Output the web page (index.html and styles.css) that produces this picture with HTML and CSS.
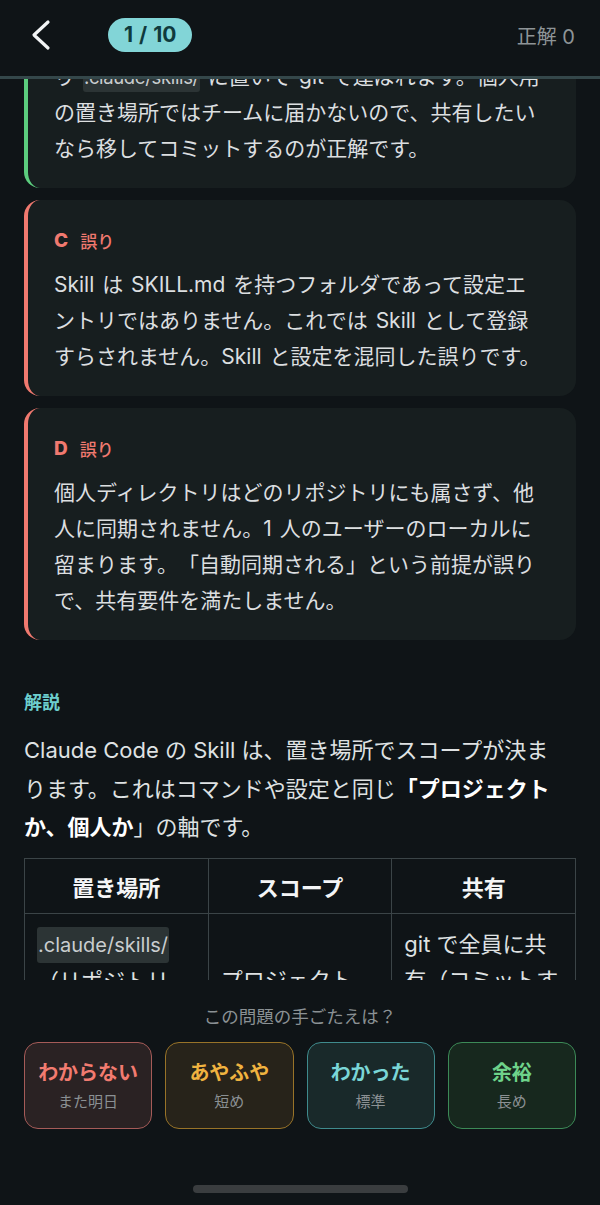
FILE: index.html
```html
<!DOCTYPE html>
<html lang="ja">
<head>
<meta charset="utf-8">
<title>Quiz</title>
<link rel="stylesheet" href="styles.css">
</head>
<body>
<div class="app">
  <header class="topbar">
    <button class="back" aria-label="戻る">
      <svg width="24" height="32" viewBox="0 0 24 32"><polyline points="19,3 5,16 19,29" fill="none" stroke="#f2f4f5" stroke-width="3.2" stroke-linecap="round" stroke-linejoin="round"/></svg>
    </button>
    <span class="progress">1 / 10</span>
    <span class="spacer"></span>
    <span class="score">正解 0</span>
  </header>

  <main class="scroll">
    <div class="scroll-inner">
      <section class="choice ok">
        <div class="choice-head"><span class="letter">B</span><span class="verdict">正解</span></div>
        <p class="choice-body">チームで共有する Skill はリポジトリ内のつま<br>り <code>.claude/skills/</code> に置いて git で運ばれます。個人用の置き場所ではチームに届かないので、共有したいなら移してコミットするのが正解です。</p>
      </section>

      <section class="choice ng">
        <div class="choice-head"><span class="letter">C</span><span class="verdict">誤り</span></div>
        <p class="choice-body">Skill は SKILL.md を持つフォルダであって設定エントリではありません。これでは Skill として登録すらされません。Skill と設定を混同した誤りです。</p>
      </section>

      <section class="choice ng">
        <div class="choice-head"><span class="letter">D</span><span class="verdict">誤り</span></div>
        <p class="choice-body">個人ディレクトリはどのリポジトリにも属さず、他人に同期されません。1 人のユーザーのローカルに留まります。「自動同期される」という前提が誤りで、共有要件を満たしません。</p>
      </section>

      <section class="explain">
        <h2 class="explain-title">解説</h2>
        <p class="explain-body">Claude Code の Skill は、置き場所でスコープが決まります。これはコマンドや設定と同じ<strong>「プロジェクトか、個人か</strong>」の軸です。</p>
        <table class="scope-table">
          <thead>
            <tr><th>置き場所</th><th>スコープ</th><th>共有</th></tr>
          </thead>
          <tbody>
            <tr>
              <td><code>.claude/skills/</code>（リポジトリ内）</td>
              <td class="mid">プロジェクト</td>
              <td>git で全員に共有（コミットすれば届く）</td>
            </tr>
            <tr>
              <td><code>~/.claude/skills/</code>（ホーム）</td>
              <td class="mid">個人</td>
              <td>自分だけ</td>
            </tr>
          </tbody>
        </table>
      </section>
    </div>
  </main>

  <footer class="rate">
    <p class="rate-prompt">この問題の手ごたえは？</p>
    <div class="rate-buttons">
      <button class="rate-btn red"><span class="rate-title">わからない</span><span class="rate-sub">また明日</span></button>
      <button class="rate-btn yellow"><span class="rate-title">あやふや</span><span class="rate-sub">短め</span></button>
      <button class="rate-btn teal"><span class="rate-title">わかった</span><span class="rate-sub">標準</span></button>
      <button class="rate-btn green"><span class="rate-title">余裕</span><span class="rate-sub">長め</span></button>
    </div>
    <div class="home-indicator"></div>
  </footer>
</div>
</body>
</html>
```

FILE: styles.css
```css
* { box-sizing: border-box; }

html, body {
  margin: 0;
  padding: 0;
  background: #0f1417;
}

body {
  font-family: "Inter", "Noto Sans CJK JP", sans-serif;
  color: #dfe2e3;
  text-spacing-trim: space-all;
}

.app {
  width: 600px;
  height: 1205px;
  display: flex;
  flex-direction: column;
  overflow: hidden;
  background: #0f1417;
}

/* ---------- header ---------- */
.topbar {
  flex: 0 0 79px;
  display: flex;
  align-items: center;
  padding: 0 25px 6px 29px;
  border-bottom: 3px solid #34474a;
}

.back {
  width: 24px;
  height: 32px;
  padding: 0;
  border: 0;
  background: none;
  display: flex;
}

.progress {
  margin-left: 55px;
  height: 34px;
  padding: 0 16px;
  border-radius: 17px;
  background: #82d5d7;
  color: #0f3a3d;
  font-weight: 700;
  font-size: 21px;
  line-height: 34px;
  word-spacing: 1px;
}

.spacer { flex: 1; }

.score {
  color: #8e9497;
  font-size: 20px;
}

/* ---------- scroll area ---------- */
.scroll {
  flex: 1 1 auto;
  overflow: hidden;
}

.scroll-inner {
  margin-top: -123px;
  padding: 0 24px;
  display: flex;
  flex-direction: column;
  gap: 12px;
}

.choice {
  background: #171e1f;
  border-radius: 16px;
  border-left: 4px solid;
  padding: 28px 32px 21px 26px;
}

.choice.ok { border-left-color: #5ccd7e; }
.choice.ng { border-left-color: #f0796f; }

.choice-head {
  display: flex;
  align-items: center;
  gap: 12px;
  height: 24px;
  font-size: 17px;
}

.choice.ok .choice-head { color: #5ccd7e; }
.choice.ng .choice-head { color: #f0796f; }

.letter { font-weight: 800; font-size: 19px; }
.verdict { font-weight: 500; }

.choice-body {
  margin: 15px 0 0;
  font-size: 21px;
  line-height: 36px;
  word-spacing: 2px;
  color: #dcdfe0;
}

code {
  font-family: "Inter", "Noto Sans CJK JP", sans-serif;
  font-size: 18.5px;
  letter-spacing: -0.35px;
  background: #2c3435;
  color: #c9cdcf;
  padding: 4px 1px;
  border-radius: 3px;
  word-spacing: 0;
}

/* ---------- explanation ---------- */
.explain {
  margin-top: 38px;
}

.explain-title {
  margin: 0;
  font-size: 18px;
  line-height: 26px;
  font-weight: 700;
  color: #6dcfcf;
}

.explain-body {
  margin: 15px 0 0;
  padding-right: 14px;
  font-size: 22px;
  line-height: 38.5px;
  color: #dfe2e3;
}

.explain-body strong {
  color: #ffffff;
  font-weight: 700;
}

.scope-table {
  margin-top: 11px;
  width: 100%;
  border-collapse: collapse;
  table-layout: fixed;
  font-size: 22px;
}

.scope-table th,
.scope-table td {
  border: 1px solid #3b4447;
}

.scope-table th {
  height: 55px;
  padding: 0 12px;
  font-weight: 700;
  color: #f4f5f6;
  text-align: center;
}

.scope-table td {
  padding: 12px 12px;
  line-height: 36px;
  vertical-align: top;
  color: #dfe2e3;
}

.scope-table td.mid {
  vertical-align: middle;
}

.scope-table td code {
  padding: 6px 1px;
  font-size: 20px;
  letter-spacing: 0;
}

/* ---------- rating footer ---------- */
.rate {
  flex: 0 0 225px;
  padding: 24px 24px 0;
  display: flex;
  flex-direction: column;
  background: #0f1417;
}

.rate-prompt {
  margin: 0;
  text-align: center;
  font-size: 17.5px;
  line-height: 26px;
  color: #8b9194;
}

.rate-buttons {
  margin-top: 12px;
  display: grid;
  grid-template-columns: repeat(4, 1fr);
  gap: 13px;
}

.rate-btn {
  height: 87px;
  border-radius: 14px;
  border: 1.5px solid;
  display: flex;
  flex-direction: column;
  align-items: center;
  justify-content: center;
  gap: 6px;
  padding: 0;
  font-family: inherit;
}

.rate-title {
  font-size: 20px;
  line-height: 26px;
  font-weight: 700;
}

.rate-sub {
  font-size: 15px;
  line-height: 20px;
  color: #8b9093;
}

.rate-btn.red    { border-color: #a55b58; background: #2a2223; }
.rate-btn.red .rate-title { color: #f27b70; }
.rate-btn.yellow { border-color: #987328; background: #27231a; }
.rate-btn.yellow .rate-title { color: #f0b340; }
.rate-btn.teal   { border-color: #3f8b8d; background: #19292a; }
.rate-btn.teal .rate-title { color: #7ad6d7; }
.rate-btn.green  { border-color: #3c8a57; background: #17281e; }
.rate-btn.green .rate-title { color: #6ed38a; }

.home-indicator {
  margin: 56px auto 0;
  width: 215px;
  height: 8px;
  border-radius: 4px;
  background: #3a3d3f;
}
```
